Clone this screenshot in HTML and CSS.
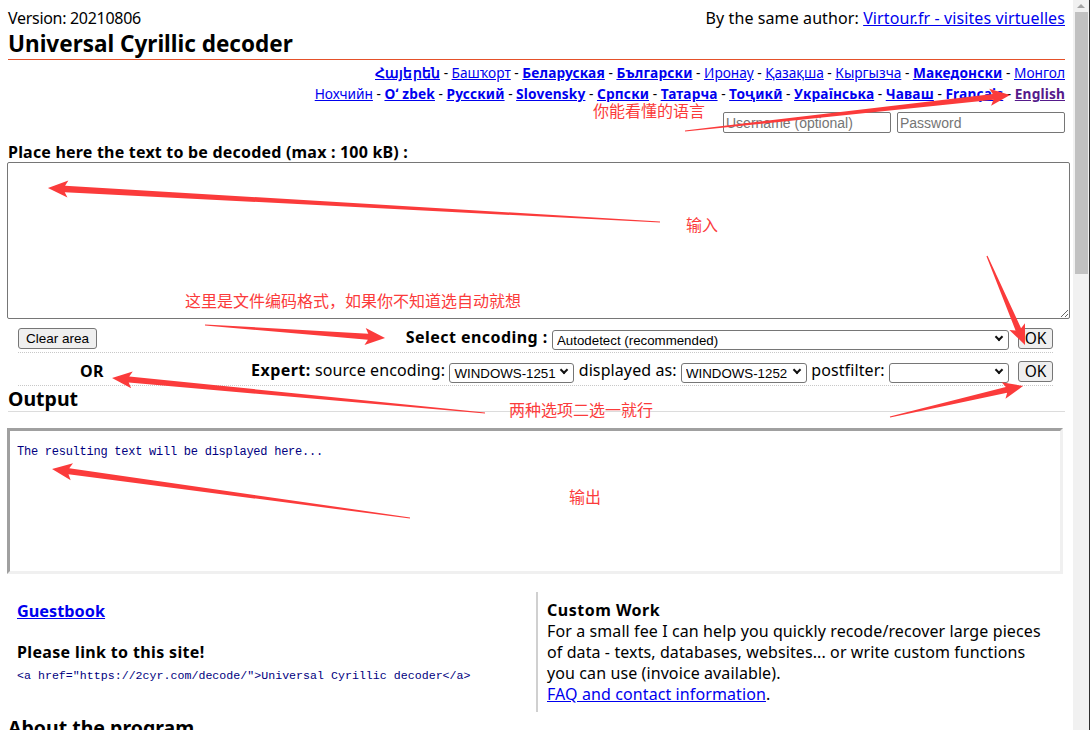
FILE: index.html
```html
<!DOCTYPE html>
<html lang="en">
<head>
<meta charset="utf-8">
<title>Universal Cyrillic decoder</title>
<link rel="stylesheet" href="styles.css">
</head>
<body>
<div class="viewport">
  <div class="page">
    <div class="topline">
      <span class="version">Version: 20210806</span>
      <span>By the same author: <a href="#">Virtour.fr - visites virtuelles</a></span>
    </div>
    <h1 class="title">Universal Cyrillic decoder</h1>
    <div class="langs">
      <div><a class="b" href="#">Հայերեն</a> - <a href="#">Башҡорт</a> - <a class="b" href="#">Беларуская</a> - <a class="b" href="#">Български</a> - <a href="#">Иронау</a> - <a href="#">Қазақша</a> - <a href="#">Кыргызча</a> - <a class="b" href="#">Македонски</a> - <a href="#">Монгол</a></div>
      <div><a href="#">Нохчийн</a> - <a class="b" href="#">Oʻ zbek</a> - <a class="b" href="#">Русский</a> - <a class="b" href="#">Slovensky</a> - <a class="b" href="#">Српски</a> - <a class="b" href="#">Татарча</a> - <a class="b" href="#">Тоҷикӣ</a> - <a class="b" href="#">Українська</a> - <a class="b" href="#">Чаваш</a> - <a class="b" href="#">Français</a> - <a class="b visited" href="#">English</a></div>
    </div>
    <div class="login">
      <input class="field" type="text" placeholder="Username (optional)">
      <input class="field" type="password" placeholder="Password">
    </div>
    <div class="label">Place here the text to be decoded (max : 100 kB) :</div>
    <textarea class="input"></textarea>
    <div class="enc">
      <div class="row">
        <div class="cell-left"><button class="btn small">Clear area</button></div>
        <div class="cell-mid"><b>Select encoding :</b> <span class="sel w-auto"><select><option>Autodetect (recommended)</option></select></span></div>
        <div class="cell-right"><button class="btn ok">OK</button></div>
      </div>
      <div class="row">
        <div class="cell-left center"><b>OR</b></div>
        <div class="cell-mid"><b>Expert:</b> source encoding: <span class="sel w-src"><select><option>WINDOWS-1251</option></select></span> displayed as: <span class="sel w-dst"><select><option>WINDOWS-1252</option></select></span> postfilter: <span class="sel w-post"><select><option></option></select></span></div>
        <div class="cell-right"><button class="btn ok">OK</button></div>
      </div>
    </div>
    <h2 class="sect">Output</h2>
    <div class="output">The resulting text will be displayed here...</div>
    <div class="footer">
      <div class="fcol left">
        <a class="guest" href="#">Guestbook</a>
        <div class="plz">Please link to this site!</div>
        <div class="code">&lt;a href="https://2cyr.com/decode/"&gt;Universal Cyrillic decoder&lt;/a&gt;</div>
      </div>
      <div class="fcol right">
        <div class="cw">Custom Work</div>
        <div>For a small fee I can help you quickly recode/recover large pieces<br>of data - texts, databases, websites... or write custom functions<br>you can use (invoice available).<br><a href="#">FAQ and contact information</a>.</div>
      </div>
    </div>
    <h2 class="sect about">About the program</h2>
  </div>
  <div class="scrollbar">
    <div class="sb-up"></div>
    <div class="sb-thumb"></div>
  </div>
  <svg class="notes" width="1090" height="730" viewBox="0 0 1090 730">
    <g fill="#fb3b3b">
      <polygon transform="translate(685 131) rotate(-6.32)" points="0,-0.6 310,-3 307,-8.5 327,0 307,8.5 310,3 0,0.6"/>
      <polygon transform="translate(660 222) rotate(-176.82)" points="0,-0.6 596,-3.2 593,-8.5 613,0 593,8.5 596,3.2 0,0.6"/>
      <polygon transform="translate(205 325) rotate(4.13)" points="0,-0.6 163.5,-3 160.5,-8.5 180.5,0 160.5,8.5 163.5,3 0,0.6"/>
      <polygon transform="translate(987 256) rotate(66.88)" points="0,-0.6 79.8,-3 76.8,-8.5 96.8,0 76.8,8.5 79.8,3 0,0.6"/>
      <polygon transform="translate(485 413) rotate(-174.64)" points="0,-0.6 357.6,-3 354.6,-8.5 374.6,0 354.6,8.5 357.6,3 0,0.6"/>
      <polygon transform="translate(890 417) rotate(-13.12)" points="0,-0.6 119.6,-3 116.6,-8.5 136.6,0 116.6,8.5 119.6,3 0,0.6"/>
      <polygon transform="translate(410 518) rotate(-172.21)" points="0,-0.6 344.3,-3 341.3,-8.5 361.3,0 341.3,8.5 344.3,3 0,0.6"/>
    </g>
    <g class="note-text">
      <text x="593" y="117">你能看懂的语言</text>
      <text x="686" y="231">输入</text>
      <text x="185" y="307">这里是文件编码格式，如果你不知道选自动就想</text>
      <text x="509" y="416">两种选项二选一就行</text>
      <text x="569" y="503">输出</text>
    </g>
  </svg>
</div>
</body>
</html>
```

FILE: styles.css
```css
html, body {
  margin: 0;
  padding: 0;
  overflow: hidden;
  background: #fff;
}

body {
  font-family: "Noto Sans", "Open Sans", sans-serif;
  font-size: 16px;
  letter-spacing: 0.1px;
  line-height: 21px;
  color: #000;
}

b {
  letter-spacing: 0.45px;
}

a {
  color: #0000ee;
}

.viewport {
  position: relative;
  display: flex;
  width: 1090px;
  height: 730px;
  overflow: hidden;
}

.page {
  width: 1057px;
  padding: 8px 8px 0 8px;
  flex: none;
}

.topline {
  display: flex;
  justify-content: space-between;
  height: 21px;
}

.version {
  letter-spacing: -0.3px;
}

.title {
  margin: 0;
  font-size: 22.5px;
  font-weight: 700;
  letter-spacing: 0;
  line-height: 30px;
  height: 30px;
  border-bottom: 1px solid #e5512a;
}

.langs {
  margin-top: 2px;
  text-align: right;
  font-size: 13.7px;
  letter-spacing: 0;
  line-height: 21px;
}

.langs a.b {
  font-weight: 700;
  letter-spacing: 0.15px;
}

.langs a.visited {
  color: #551a8b;
}

.login {
  margin-top: 8px;
  display: flex;
  justify-content: flex-end;
  gap: 6px;
  height: 21px;
}

.field {
  box-sizing: border-box;
  width: 168px;
  height: 21px;
  margin: 0;
  padding: 1px 2px;
  border: 1px solid #767676;
  border-radius: 2px;
  font-family: "Liberation Sans", Arial, sans-serif;
  font-size: 14px;
}

.field::placeholder {
  color: #757575;
}

.label {
  margin-top: 9px;
  font-weight: 700;
  letter-spacing: 0.2px;
  line-height: 20px;
  height: 20px;
}

.input {
  display: block;
  box-sizing: border-box;
  width: 1063px;
  height: 157px;
  margin: 0 0 0 -1px;
  border: 1px solid #767676;
  border-radius: 2px;
  resize: vertical;
}

.enc {
  margin: 1px 12px 0 10px;
}

.row {
  display: grid;
  grid-template-columns: 148px 1fr auto;
  column-gap: 9px;
  align-items: center;
  padding: 7px 0 3px;
  border-bottom: 1px dotted #c8c8c8;
  height: 22px;
}

.cell-mid {
  text-align: right;
  white-space: nowrap;
}

.center {
  text-align: center;
}

.btn {
  box-sizing: border-box;
  height: 21px;
  margin: 0;
  padding: 0 6px;
  border: 1px solid #767676;
  border-radius: 3px;
  background: #efefef;
  color: #000;
  font-family: "Liberation Sans", Arial, sans-serif;
  font-size: 13.5px;
  letter-spacing: 0;
  line-height: 19px;
}

.btn.small {
  width: 79px;
}

.btn.ok {
  width: 35px;
  padding: 0;
  font-family: "Noto Sans", "Open Sans", sans-serif;
  font-size: 15.5px;
}

.sel {
  position: relative;
  display: inline-block;
  vertical-align: middle;
  height: 20px;
}

.sel select {
  box-sizing: border-box;
  -webkit-appearance: none;
  appearance: none;
  width: 100%;
  height: 20px;
  margin: 0;
  padding: 0 10px 0 4px;
  border: 1px solid #767676;
  border-radius: 3px;
  background: #fff;
  color: #000;
  font-family: "Liberation Sans", Arial, sans-serif;
  font-size: 13.3px;
  letter-spacing: 0;
}

.sel::after {
  content: "";
  position: absolute;
  right: 7px;
  top: 5px;
  width: 4px;
  height: 4px;
  border-right: 2px solid #111;
  border-bottom: 2px solid #111;
  transform: rotate(45deg);
  pointer-events: none;
}

.w-auto { width: 457px; }
.w-src { width: 125px; }
.w-dst { width: 126px; }
.w-post { width: 120px; }

.sect {
  margin: 0;
  font-size: 19.5px;
  font-weight: 700;
  letter-spacing: 0;
  line-height: 25px;
  height: 25px;
  border-bottom: 1px solid #dcdcdc;
}

.output {
  box-sizing: border-box;
  margin: 16px 0 0 -1px;
  width: 1056px;
  height: 146px;
  padding: 14px 7px;
  border-style: solid;
  border-width: 3px;
  border-color: #a0a0a0 #f0f0f0 #f0f0f0 #a0a0a0;
  color: #000080;
  font-family: "Liberation Mono", monospace;
  font-size: 12px;
  letter-spacing: -0.25px;
  line-height: 14px;
}

.footer {
  margin-top: 18px;
  display: grid;
  grid-template-columns: 530px 1fr;
  height: 120px;
}

.fcol.left {
  padding: 0 0 0 9px;
  border-right: 2px solid #d0d0d0;
}

.fcol.right {
  padding: 8px 0 0 9px;
}

.guest {
  display: block;
  margin-top: 8px;
  font-weight: 700;
  font-size: 16.3px;
  letter-spacing: 0;
  line-height: 22px;
}

.plz {
  margin-top: 20px;
  font-weight: 700;
  letter-spacing: 0.35px;
  line-height: 20px;
}

.code {
  margin-top: 6px;
  font-family: "Liberation Mono", monospace;
  font-size: 11.6px;
  letter-spacing: 0.02px;
  line-height: 16px;
  color: #000080;
}

.cw {
  font-weight: 700;
  letter-spacing: 0.5px;
}

.about {
  margin-top: 3px;
  border-bottom: none;
}

.scrollbar {
  width: 16px;
  height: 730px;
  background: #f1f1f1;
  border-right: 1px solid #2e2e2e;
  flex: none;
}

.sb-up {
  width: 0;
  height: 0;
  margin: 4px auto 0;
  border-left: 4px solid transparent;
  border-right: 4px solid transparent;
  border-bottom: 4px solid #a3a3a3;
}

.sb-thumb {
  width: 13px;
  height: 262px;
  margin: 4px 0 0 2px;
  background: #c1c1c1;
}

.notes {
  position: absolute;
  left: 0;
  top: 0;
  pointer-events: none;
}

.note-text {
  fill: #fb3b3b;
  font-family: "Noto Sans CJK SC", sans-serif;
  font-size: 16px;
  letter-spacing: 0;
}
```
